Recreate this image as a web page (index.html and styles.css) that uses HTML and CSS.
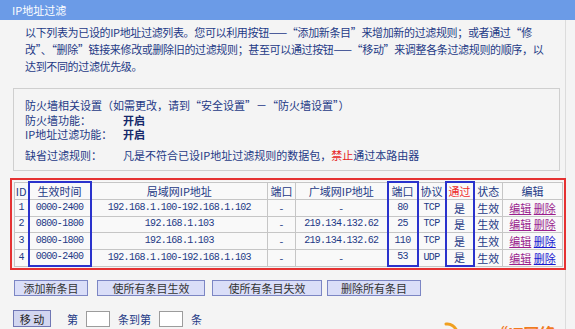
FILE: index.html
```html
<!DOCTYPE html>
<html>
<head>
    <title>IP地址过滤</title>
    <link rel="stylesheet" href="styles.css">
</head>
<body>
    <div class="titlebar">IP地址过滤</div>

    <div class="content">
        <p class="intro">
            以下列表为已设的IP地址过滤列表。您可以利用按钮——“添加新条目”来增加新的过滤规则；或者通过“修<br>
            改”、“删除”链接来修改或删除旧的过滤规则；甚至可以通过按钮——“移动”来调整各条过滤规则的顺序，以<br>
            达到不同的过滤优先级。
        </p>

        <div class="fwbox">
            <div class="fw-title">防火墙相关设置（如需更改，请到“安全设置”－“防火墙设置”）</div>
            <div class="fw-row">
                <span class="fw-label">防火墙功能：</span>
                <span class="fw-value">开启</span>
            </div>
            <div class="fw-row">
                <span class="fw-label">IP地址过滤功能：</span>
                <span class="fw-value">开启</span>
            </div>
            <div class="fw-row fw-last">
                <span class="fw-label">缺省过滤规则：</span>
                <span>凡是不符合已设IP地址过滤规则的数据包，<span class="deny">禁止</span>通过本路由器</span>
            </div>
        </div>

        <div class="rules">
            <table class="rule-table">
                <colgroup>
                    <col style="width:14px">
                    <col style="width:62px">
                    <col style="width:177px">
                    <col style="width:28px">
                    <col style="width:92px">
                    <col style="width:30px">
                    <col style="width:28px">
                    <col style="width:28px">
                    <col style="width:29px">
                    <col style="width:60px">
                </colgroup>
                <thead>
                    <tr>
                        <th>ID</th>
                        <th class="hl">生效时间</th>
                        <th>局域网IP地址</th>
                        <th>端口</th>
                        <th>广域网IP地址</th>
                        <th class="hl">端口</th>
                        <th>协议</th>
                        <th class="hl pass">通过</th>
                        <th>状态</th>
                        <th>编辑</th>
                    </tr>
                </thead>
                <tbody>
                    <tr>
                        <td class="num">1</td>
                        <td class="hl num">0000-2400</td>
                        <td class="num">192.168.1.100-192.168.1.102</td>
                        <td>-</td>
                        <td>-</td>
                        <td class="hl num">80</td>
                        <td class="num">TCP</td>
                        <td class="hl">是</td>
                        <td>生效</td>
                        <td><a class="visited">编辑</a> <a class="visited">删除</a></td>
                    </tr>
                    <tr>
                        <td class="num">2</td>
                        <td class="hl num">0800-1800</td>
                        <td class="num">192.168.1.103</td>
                        <td>-</td>
                        <td class="num">219.134.132.62</td>
                        <td class="hl num">25</td>
                        <td class="num">TCP</td>
                        <td class="hl">是</td>
                        <td>生效</td>
                        <td><a class="visited">编辑</a> <a class="visited">删除</a></td>
                    </tr>
                    <tr>
                        <td class="num">3</td>
                        <td class="hl num">0800-1800</td>
                        <td class="num">192.168.1.103</td>
                        <td>-</td>
                        <td class="num">219.134.132.62</td>
                        <td class="hl num">110</td>
                        <td class="num">TCP</td>
                        <td class="hl">是</td>
                        <td>生效</td>
                        <td><a class="visited">编辑</a> <a>删除</a></td>
                    </tr>
                    <tr class="last">
                        <td class="num">4</td>
                        <td class="hl num">0000-2400</td>
                        <td class="num">192.168.1.100-192.168.1.103</td>
                        <td>-</td>
                        <td>-</td>
                        <td class="hl num">53</td>
                        <td class="num">UDP</td>
                        <td class="hl">是</td>
                        <td>生效</td>
                        <td><a class="visited">编辑</a> <a>删除</a></td>
                    </tr>
                </tbody>
            </table>
        </div>

        <div class="buttons">
            <button class="btn w-add">添加新条目</button>
            <button class="btn w-on">使所有条目生效</button>
            <button class="btn w-off">使所有条目失效</button>
            <button class="btn w-del">删除所有条目</button>
        </div>

        <div class="move-row">
            <button class="btn move">移 动</button>
            <span class="move-text first">第</span>
            <input class="move-input" type="text">
            <span class="move-text">条到第</span>
            <input class="move-input" type="text">
            <span class="move-text">条</span>
        </div>
    </div>

    <div class="watermark">
        <svg width="16" height="10" viewBox="0 0 16 10">
            <path d="M2 2 Q9 1 13 9" stroke="#f0a020" stroke-width="3" fill="none" stroke-linecap="round"/>
        </svg>
        <span class="wm-text">“IT网络</span>
    </div>
</body>
</html>
```

FILE: styles.css
```css
html, body {
    overflow: hidden;
}

body {
    margin: 0;
    width: 575px;
    height: 329px;
    background-color: #f4f4f4;
    font-family: "Noto Sans CJK SC", "Liberation Sans", sans-serif;
    font-size: 11px;
    color: #1e3a86;
    position: relative;
}

.titlebar {
    height: 20px;
    line-height: 20px;
    padding-left: 12px;
    background-color: #6b9be7;
    color: #ffffff;
    font-size: 11px;
}

.content {
    width: 565px;
    height: 309px;
    border-right: 1px solid #dcdcdc;
}

.intro {
    margin: 0;
    padding: 4px 0 0 25px;
    line-height: 17px;
    white-space: nowrap;
    letter-spacing: -0.35px;
}

.fwbox {
    margin: 13px 0 0 13px;
    width: 547px;
    border: 1px solid #cfcfcf;
    padding: 9px 0 8px 11px;
    box-sizing: border-box;
    line-height: 14.5px;
}

.fw-row {
    display: flex;
}

.fw-last {
    margin-top: 6px;
}

.fw-label {
    width: 98px;
}

.fw-value {
    font-weight: bold;
    color: #14286a;
}

.deny {
    color: #e62222;
}

.rules {
    margin: 7px 0 0 10px;
    width: 556px;
    border: 2px solid #e53232;
    padding: 1px 2px 1px 2px;
    box-sizing: border-box;
}

.rule-table {
    width: 548px;
    table-layout: fixed;
    border-collapse: collapse;
    background-color: #f9f9f9;
}

.rule-table th,
.rule-table td {
    border: 1px solid #c6c6c6;
    padding: 0;
    text-align: center;
    white-space: nowrap;
    overflow: hidden;
    font-weight: normal;
    font-size: 11px;
    line-height: 14px;
}

.rule-table th {
    height: 16px;
}

.rule-table td {
    height: 15.5px;
}

.rule-table .num {
    font-family: "Liberation Mono", monospace;
    font-size: 10px;
    letter-spacing: -0.7px;
}

.rule-table .hl {
    border-left: 2px solid #2a32cc;
    border-right: 2px solid #2a32cc;
}

.rule-table th.hl {
    border-top: 2px solid #2a32cc;
}

.rule-table tr.last td.hl {
    border-bottom: 2px solid #2a32cc;
}

.rule-table th.pass {
    color: #ee2a2a;
}

.rule-table a {
    color: #1a1ad0;
    text-decoration: underline;
    cursor: pointer;
}

.rule-table a.visited {
    color: #9a1e8e;
}

.buttons {
    display: flex;
    margin: 10px 0 0 14px;
}

.btn {
    height: 16px;
    padding: 0;
    background-color: #dadef8;
    border: 1px solid #7c86c4;
    color: #333333;
    font-family: "Noto Sans CJK SC", sans-serif;
    font-size: 11px;
    line-height: 14px;
}

.w-add {
    width: 74px;
}

.w-on {
    width: 108px;
    margin-left: 9px;
}

.w-off {
    width: 110px;
    margin-left: 7px;
}

.w-del {
    width: 94px;
    margin-left: 5px;
}

.move-row {
    display: flex;
    align-items: center;
    margin: 14px 0 0 13px;
    height: 17px;
}

.move {
    width: 38px;
    height: 17px;
    background-color: #d2d6f0;
    border-color: #7077b4;
    color: #222222;
}

.move-text {
    margin: 0 8px;
}

.move-text.first {
    margin-left: 16px;
}

.move-input {
    width: 24px;
    height: 16px;
    box-sizing: border-box;
    border: 1px solid #9c9c9c;
    background-color: #ffffff;
    padding: 0;
}

.watermark {
    position: absolute;
    left: 444px;
    top: 322px;
    display: flex;
    align-items: flex-start;
}

.wm-text {
    margin-left: 32px;
    margin-top: 1px;
    color: #f07a1e;
    font-size: 16px;
    font-weight: bold;
    line-height: 20px;
}
```
